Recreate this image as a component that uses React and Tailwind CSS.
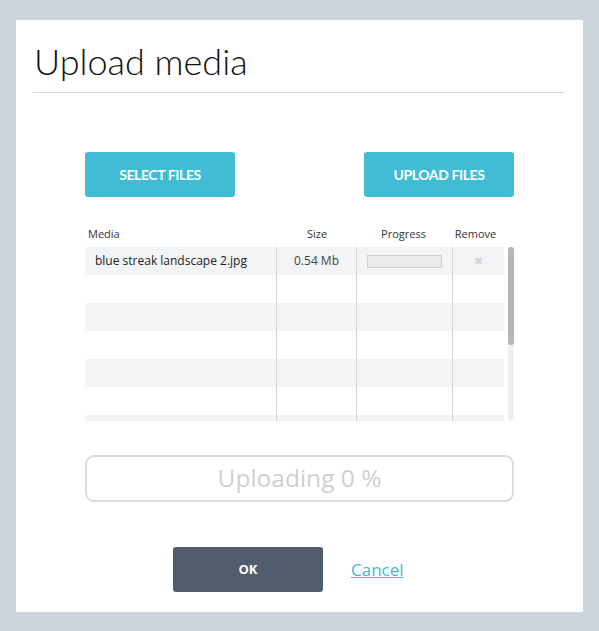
import React from 'react';

const filas = [
  { nombre: 'blue streak landscape 2.jpg', tam: '0.54 Mb' },
  null, null, null, null, null, null,
];

function UploadMedia() {
  return (
    <div className="min-h-[631px] bg-[#cdd5dc] pt-[20px] pb-[19px] px-[16px]">
      <div className="bg-white h-[592px] flex flex-col">
        {/* cabecera */}
        <h1 className="pl-[18px] pt-[14px] h-[72px] text-[36px] leading-[54px] font-light text-[#111] font-['Lato',sans-serif]">
          Upload media
        </h1>
        <div className="mx-[17px] mr-[19px] border-t border-[#d6d9dc]" />

        <div className="px-[69px] pt-[59px] font-['Open_Sans',sans-serif]">
          <div className="flex justify-between">
            <button className="w-[150px] h-[45px] rounded-[3px] bg-[#41bcd4] text-white text-[14px] font-bold tracking-[-0.4px] font-['Lato',sans-serif]">
              SELECT FILES
            </button>
            <button className="w-[150px] h-[45px] rounded-[3px] bg-[#41bcd4] text-white text-[14px] font-bold tracking-[-0.4px] font-['Lato',sans-serif]">
              UPLOAD FILES
            </button>
          </div>

          {/* tabla */}
          <div className="mt-[25px] flex">
            <div className="w-[419px]">
              <div className="flex h-[25px] items-center text-[11px] text-[#333]">
                <div className="w-[192px] pl-[3px]">Media</div>
                <div className="w-[80px] text-center">Size</div>
                <div className="w-[96px] text-center pr-[3px]">Progress</div>
                <div className="w-[51px] text-center pr-[6px]">Remove</div>
              </div>
              <div className="h-[174px] overflow-hidden">
                {filas.map((f, i) => (
                  <div key={i} className={`flex h-[28px] items-center ${i % 2 === 0 ? 'bg-[#f3f4f5]' : 'bg-white'}`}>
                    <div className="w-[192px] h-full flex items-center pl-[10px] text-[12px] text-[#222] border-r border-[#d2d2d2]">
                      {f ? f.nombre : ''}
                    </div>
                    <div className="w-[80px] h-full flex items-center justify-center text-[12px] text-[#444] border-r border-[#d2d2d2]">
                      {f ? f.tam : ''}
                    </div>
                    <div className="w-[96px] h-full flex items-center justify-center border-r border-[#d2d2d2]">
                      {f && <div className="w-[75px] h-[13px] bg-[#ececec] border border-[#cfcfcf]" />}
                    </div>
                    <div className="w-[51px] h-full flex items-center justify-center text-[11px] text-[#d5d5d5]">
                      {f ? '✖' : ''}
                    </div>
                  </div>
                ))}
              </div>
            </div>
            <div className="ml-[4px] mt-[25px] w-[7px] h-[174px] rounded-[3px] bg-[#eef0f1]">
              <div className="h-[98px] rounded-[3px] bg-[#b3b7ba]" />
            </div>
          </div>

          <div className="mt-[34px] h-[47px] rounded-[9px] border-2 border-[#dcdcdc] flex items-center justify-center text-[24.5px] text-[#cfcfcf]">
            Uploading 0 %
          </div>

          <div className="mt-[45px] flex items-center pl-[88px]">
            <button className="w-[150px] h-[45px] rounded-[3px] bg-[#4f5d6d] text-white text-[13px] font-bold">
              OK
            </button>
            <a href="#" className="ml-[28px] text-[17px] text-[#3fbad2] underline">
              Cancel
            </a>
          </div>
        </div>
      </div>
    </div>
  );
}

export default function App() {
  return <UploadMedia />;
}
